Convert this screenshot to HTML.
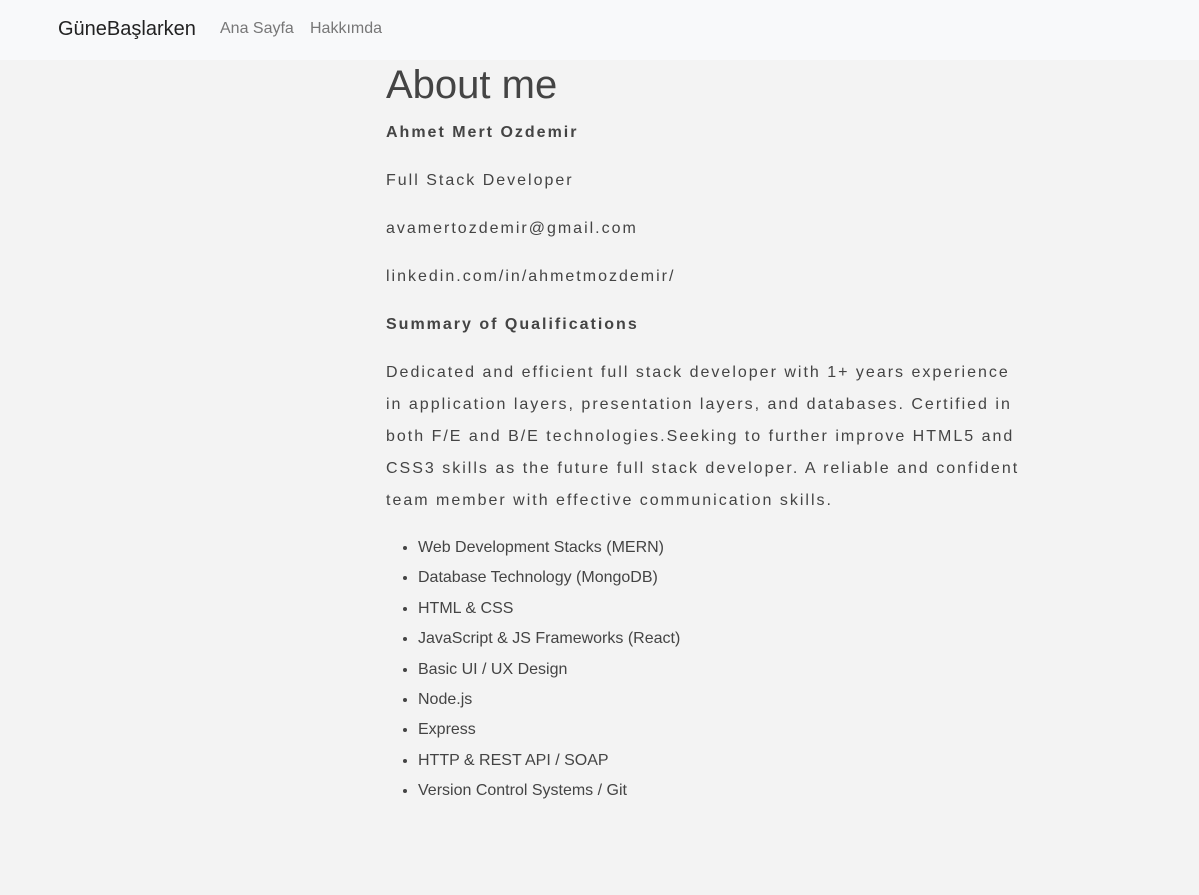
<!DOCTYPE html>
<html><head><meta charset="utf-8"><style>
body{margin:0;background:#f3f3f3;font-family:"Liberation Sans",sans-serif;color:#444;}
nav{height:60px;background:#f8f9fa;position:relative}
.brand{position:absolute;left:58px;top:17px;font-size:20px;color:#222;line-height:24px}
.l{position:absolute;top:19px;font-size:16px;color:#777;line-height:20px}
main{position:absolute;left:386px;top:60px;width:700px}
h1{font-size:40px;font-weight:400;margin:1px 0 0;line-height:48px;color:#444}
p{font-size:16px;letter-spacing:2px;line-height:32px;margin:0 0 16px;white-space:nowrap}
p.f{margin-top:8px}
b{font-weight:700}
ul{margin:0;padding-left:32px;font-size:16px;line-height:30.4px}
</style></head><body>
<nav><span class="brand">GüneBaşlarken</span><span class="l" style="left:220px">Ana Sayfa</span><span class="l" style="left:310px">Hakkımda</span></nav>
<main>
<h1>About me</h1>
<p class="f"><b>Ahmet Mert Ozdemir</b></p>
<p>Full Stack Developer</p>
<p>avamertozdemir@gmail.com</p>
<p>linkedin.com/in/ahmetmozdemir/</p>
<p><b>Summary of Qualifications</b></p>
<p>Dedicated and efficient full stack developer with 1+ years experience<br>in application layers, presentation layers, and databases. Certified in<br>both F/E and B/E technologies.Seeking to further improve HTML5 and<br>CSS3 skills as the future full stack developer. A reliable and confident<br>team member with effective communication skills.</p>
<ul>
<li>Web Development Stacks (MERN)</li>
<li>Database Technology (MongoDB)</li>
<li>HTML &amp; CSS</li>
<li>JavaScript &amp; JS Frameworks (React)</li>
<li>Basic UI / UX Design</li>
<li>Node.js</li>
<li>Express</li>
<li>HTTP &amp; REST API / SOAP</li>
<li>Version Control Systems / Git</li>
</ul>
</main>
</body></html>
